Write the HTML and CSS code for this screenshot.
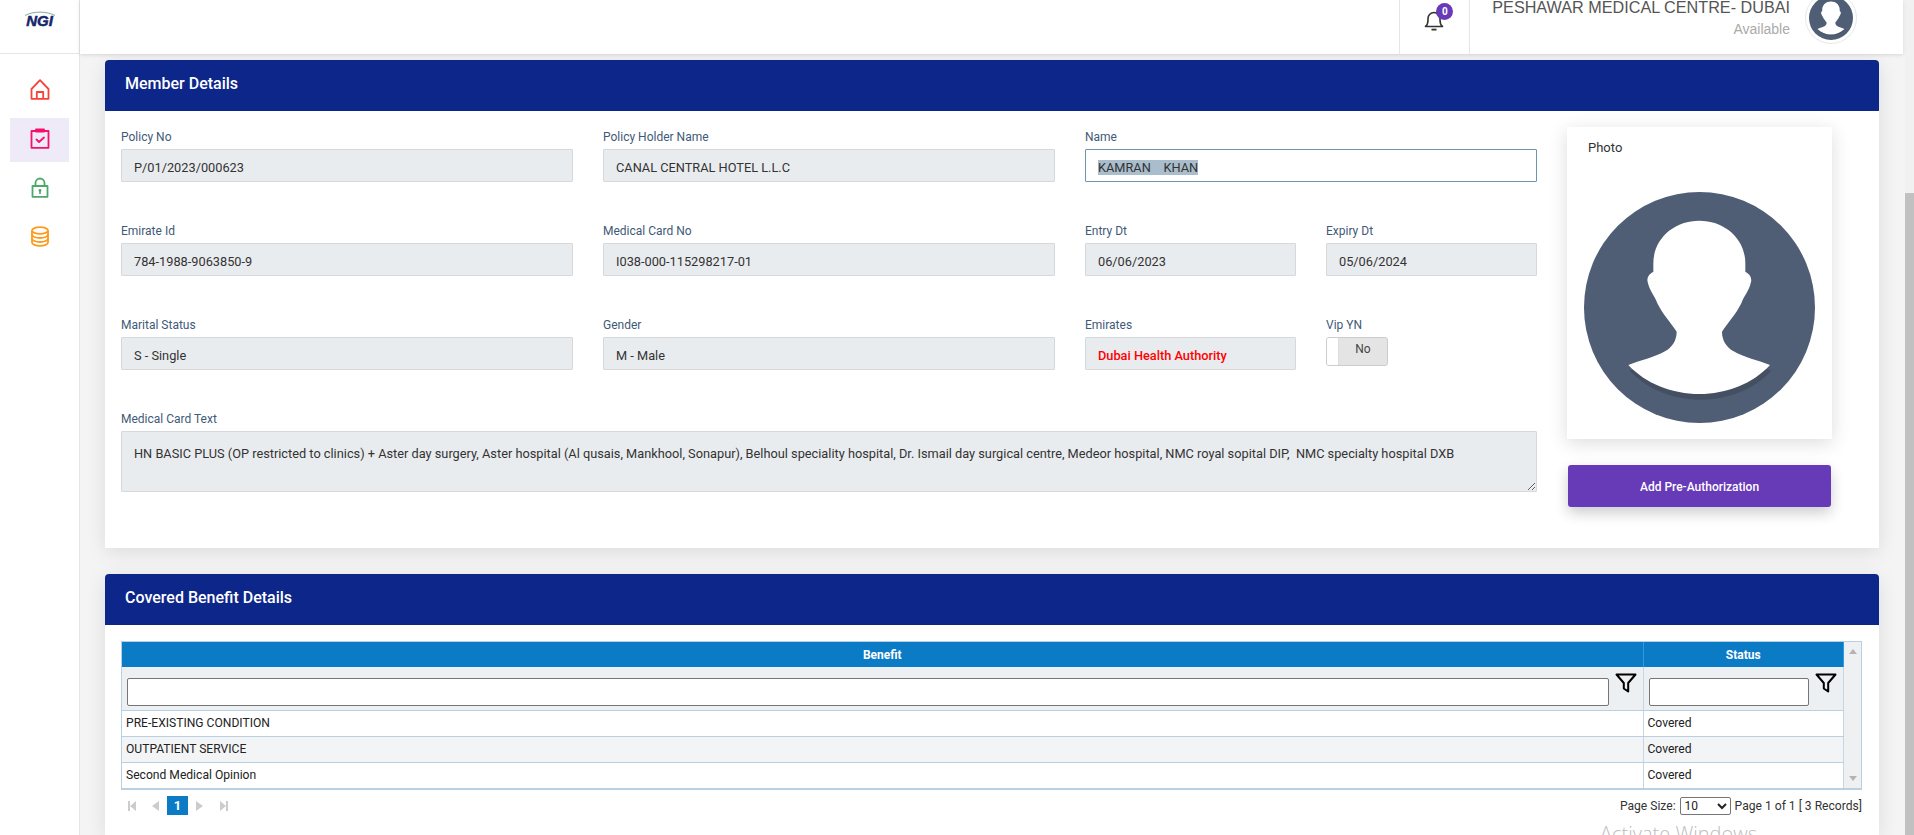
FILE: index.html
```html
<!DOCTYPE html>
<html lang="en">
<head>
<meta charset="utf-8">
<title>Member Details</title>
<link rel="stylesheet" href="styles.css">
</head>
<body>
<svg class="defs" width="0" height="0" aria-hidden="true">
  <defs>
    <symbol id="person" viewBox="0 0 693 693">
      <circle cx="346.5" cy="346.5" r="346.5" fill="#4f5e75"/>
      <path fill="#444f62" transform="translate(4 17)" d="M133 519C170 505 215 495 243 478L449 478C476 495 521 505 558 519C507 575 427 606 346 606C265 606 185 575 133 519Z"/>
      <path fill="#fff" d="M346 86C270 86 208 140 208 214L208 240C195 245 188 258 191 270C198 300 212 310 220 334C235 365 262 395 278 419C278 445 265 465 243 478C215 495 170 505 133 519C185 575 265 606 346 606C427 606 507 575 558 519C521 505 476 495 449 478C427 465 414 445 414 419C430 395 457 365 472 334C480 310 494 300 501 270C504 258 497 245 484 240L484 214C484 140 422 86 346 86Z"/>
    </symbol>
    <symbol id="funnel" viewBox="0 0 22 20">
      <path fill="none" stroke="#000" stroke-width="2" stroke-linejoin="round" d="M1.5 1.5H20.5L13.2 10V18.5L8.8 15.5V10Z"/>
    </symbol>
  </defs>
</svg>

<aside class="sidebar">
  <div class="logo">
    <svg class="logo-arc" width="32" height="5" viewBox="0 0 32 5"><path d="M1 4.5C9 0 23 0 31 4.5" fill="none" stroke="#7fae9a" stroke-width="1"/></svg>
    <span class="logo-text">NGI</span>
  </div>
  <nav class="nav">
    <a class="nav-item">
      <svg width="20" height="21" viewBox="0 0 20 21" fill="none" stroke="#f4433a" stroke-width="1.8" stroke-linejoin="round"><path d="M10 1.2L1.5 10V19.8H18.5V10Z"/><path d="M6.8 19.8V13H13.2V19.8"/></svg>
    </a>
    <a class="nav-item is-active">
      <svg width="20" height="21" viewBox="0 0 20 21" fill="none" stroke="#f5106e" stroke-width="1.8" stroke-linejoin="round"><path d="M1.5 3H18.5V19.8H1.5Z"/><path d="M6 1.5H14V3.5H6Z" fill="#f5106e"/><path d="M6.5 11.5L9 14L14 9.5" stroke-linecap="round"/></svg>
    </a>
    <a class="nav-item">
      <svg width="20" height="21" viewBox="0 0 20 21" fill="none" stroke="#4fa86a" stroke-width="1.8" stroke-linejoin="round"><path d="M2.5 9H17.5V19.8H2.5Z"/><path d="M5.5 9V6A4.5 4.5 0 0 1 14.5 6V9"/><circle cx="10" cy="13.5" r="1.4" fill="#4fa86a" stroke="none"/><path d="M10 14V17" stroke-width="1.6"/></svg>
    </a>
    <a class="nav-item">
      <svg width="20" height="21" viewBox="0 0 20 21" fill="none" stroke="#ff9a1f" stroke-width="1.8"><ellipse cx="10" cy="4.5" rx="8" ry="3.4"/><path d="M2 4.5V16.5C2 18.4 5.6 19.9 10 19.9S18 18.4 18 16.5V4.5"/><path d="M2 8.6C2 10.5 5.6 12 10 12S18 10.5 18 8.6"/><path d="M2 12.6C2 14.5 5.6 16 10 16S18 14.5 18 12.6"/></svg>
    </a>
  </nav>
</aside>

<div class="main">
  <header class="topbar">
    <div class="bell-cell">
      <svg width="20" height="21" viewBox="0 0 20 21" fill="none" stroke="#333" stroke-width="1.6" stroke-linejoin="round"><path d="M1.5 16.5C3.5 15 4 13.5 4 10V8.5A6 6 0 0 1 16 8.5V10C16 13.5 16.500 15 18.500 16.500Z"/><path d="M7.500 19.600H12.500" stroke-width="1.800"/></svg>
      <span class="badge">0</span>
    </div>
    <div class="user-text">
      <span class="user-name">PESHAWAR MEDICAL CENTRE- DUBAI</span>
      <span class="user-status">Available</span>
    </div>
    <div class="user-ring"><svg class="user-pic"><use href="#person"/></svg></div>
  </header>

  <div class="content">
    <section class="card">
      <h2 class="card-title">Member Details</h2>
      <div class="details">
        <div class="form">
          <div class="field span-2"><label>Policy No</label><div class="value">P/01/2023/000623</div></div>
          <div class="field span-2"><label>Policy Holder Name</label><div class="value">CANAL CENTRAL HOTEL L.L.C</div></div>
          <div class="field span-2"><label>Name</label><div class="value is-focus"><span class="selected">KAMRAN &nbsp; &nbsp;KHAN</span></div></div>

          <div class="field span-2"><label>Emirate Id</label><div class="value">784-1988-9063850-9</div></div>
          <div class="field span-2"><label>Medical Card No</label><div class="value">I038-000-115298217-01</div></div>
          <div class="field"><label>Entry Dt</label><div class="value">06/06/2023</div></div>
          <div class="field"><label>Expiry Dt</label><div class="value">05/06/2024</div></div>

          <div class="field span-2"><label>Marital Status</label><div class="value">S - Single</div></div>
          <div class="field span-2"><label>Gender</label><div class="value">M - Male</div></div>
          <div class="field"><label>Emirates</label><div class="value is-alert">Dubai Health Authority</div></div>
          <div class="field"><label>Vip YN</label>
            <div class="toggle"><span class="toggle-knob"></span><span class="toggle-text">No</span></div>
          </div>

          <div class="field span-6"><label>Medical Card Text</label>
            <textarea class="value-area" readonly>HN BASIC PLUS (OP restricted to clinics) + Aster day surgery, Aster hospital (Al qusais, Mankhool, Sonapur), Belhoul speciality hospital, Dr. Ismail day surgical centre, Medeor hospital, NMC royal sopital DIP,  NMC specialty hospital DXB</textarea>
          </div>
        </div>

        <div class="side">
          <div class="photo-card">
            <div class="photo-label">Photo</div>
            <svg class="photo-pic"><use href="#person"/></svg>
          </div>
          <button class="primary-btn" type="button">Add Pre-Authorization</button>
        </div>
      </div>
    </section>

    <section class="card card-fill">
      <h2 class="card-title">Covered Benefit Details</h2>
      <div class="grid-body">
        <div class="grid-wrap">
          <table class="grid">
            <colgroup><col class="col-benefit"><col class="col-status"></colgroup>
            <thead>
              <tr class="head-row"><th>Benefit</th><th>Status</th></tr>
              <tr class="filter-row">
                <td><div class="filter"><input class="filter-input" type="text" aria-label="Filter benefit"><svg class="funnel"><use href="#funnel"/></svg></div></td>
                <td><div class="filter"><input class="filter-input" type="text" aria-label="Filter status"><svg class="funnel"><use href="#funnel"/></svg></div></td>
              </tr>
            </thead>
            <tbody>
              <tr><td>PRE-EXISTING CONDITION</td><td>Covered</td></tr>
              <tr class="alt"><td>OUTPATIENT SERVICE</td><td>Covered</td></tr>
              <tr><td>Second Medical Opinion</td><td>Covered</td></tr>
            </tbody>
          </table>
          <div class="grid-scroll">
            <svg width="8" height="5" viewBox="0 0 8 5"><path d="M4 0L8 5H0Z" fill="#b4b4b4"/></svg>
            <svg width="8" height="5" viewBox="0 0 8 5"><path d="M4 5L8 0H0Z" fill="#b4b4b4"/></svg>
          </div>
        </div>
        <div class="pager">
          <div class="pager-links">
            <svg width="8" height="10" viewBox="0 0 8 10"><path d="M0 0H2V10H0ZM8 0V10L2 5Z" fill="#ccc"/></svg>
            <svg class="gap-prev" width="7" height="10" viewBox="0 0 7 10"><path d="M7 0V10L0 5Z" fill="#ccc"/></svg>
            <span class="page-current">1</span>
            <svg width="7" height="10" viewBox="0 0 7 10"><path d="M0 0V10L7 5Z" fill="#ccc"/></svg>
            <svg class="gap-last" width="8" height="10" viewBox="0 0 8 10"><path d="M8 0H6V10H8ZM0 0V10L6 5Z" fill="#ccc"/></svg>
          </div>
          <div class="pager-info">
            <span>Page Size:</span>
            <select class="page-size" aria-label="Page size"><option>10</option><option>20</option><option>50</option></select>
            <span>Page 1 of 1 [ 3 Records]</span>
          </div>
        </div>
      </div>
    </section>
  </div>
</div>

<div class="scrollbar"><div class="scrollbar-thumb"></div></div>
<div class="watermark">Activate Windows</div>
</body>
</html>
```

FILE: styles.css
```css
* { box-sizing: border-box; }

html, body { height: 100%; }

body {
  margin: 0;
  display: flex;
  height: 835px;
  overflow: hidden;
  background: #f4f4f4;
  color: #222;
  font-family: Roboto, "Liberation Sans", sans-serif;
  font-size: 12px;
}

.defs { position: absolute; }

/* Sidebar */
.sidebar {
  flex: 0 0 80px;
  background: #fff;
  border-right: 1px solid #e6e6e6;
}

.logo {
  height: 54px;
  border-bottom: 1px solid #e6e6e6;
  display: flex;
  flex-direction: column;
  align-items: center;
  padding-top: 11px;
}

.logo-arc { display: block; margin-left: 1px; }

.logo-text {
  margin-top: -3px;
  font-family: "Liberation Sans", sans-serif;
  font-size: 15px;
  line-height: 16px;
  font-weight: 700;
  font-style: italic;
  color: #17266a;
  -webkit-text-stroke: .5px #17266a;
}

.nav {
  display: flex;
  flex-direction: column;
  gap: 5px;
  padding: 15px 10px 0;
}

.nav-item {
  height: 44px;
  display: flex;
  justify-content: center;
  padding-top: 10px;
}

.nav-item.is-active { background: #efeaf7; }

/* Main column */
.main {
  flex: 1;
  min-width: 0;
  display: flex;
  flex-direction: column;
}

.topbar {
  flex: 0 0 54px;
  margin-right: 2px;
  display: flex;
  justify-content: flex-end;
  background: #fff;
  box-shadow: 0 1px 4px rgba(0, 0, 0, .12);
  position: relative;
  z-index: 2;
}

.bell-cell {
  width: 71px;
  position: relative;
  display: flex;
  justify-content: center;
  padding-top: 10px;
  border-left: 1px solid #e6e6e6;
  border-right: 1px solid #e6e6e6;
}

.bell-cell svg { margin-right: 1px; }

.badge {
  position: absolute;
  left: 36px;
  top: 3px;
  width: 17px;
  height: 17px;
  border-radius: 50%;
  background: #673ab7;
  color: #fff;
  font-size: 10px;
  font-weight: 700;
  line-height: 17px;
  text-align: center;
}

.user-text {
  display: flex;
  flex-direction: column;
  align-items: flex-end;
  margin-top: -2px;
  padding-left: 22px;
  font-family: "Liberation Sans", sans-serif;
}

.user-name { font-size: 16.2px; line-height: 18px; color: #555; }

.user-status { margin-top: 5px; font-size: 14px; line-height: 16px; color: #aaa; }

.user-ring {
  width: 52px;
  height: 52px;
  margin: -8px 46px 0 15px;
  padding: 3px;
  border: 1px solid #e8e8e8;
  border-radius: 50%;
}

.user-pic { display: block; width: 44px; height: 44px; }

/* Content */
.content {
  flex: 1;
  min-height: 0;
  display: flex;
  flex-direction: column;
  gap: 26px;
  padding: 6px 26px 0 25px;
}

.card {
  flex: none;
  background: #fff;
  border-radius: 4px 4px 0 0;
  box-shadow: 0 4px 20px rgba(0, 0, 0, .1);
}

.card-fill { flex: 1; }

.card-title {
  margin: 0;
  height: 51px;
  padding: 0 20px;
  border-radius: 4px 4px 0 0;
  background: #0d2689;
  color: #fff;
  font-size: 16px;
  font-weight: 500;
  line-height: 47px;
}

.details {
  display: flex;
  gap: 30px;
  padding: 16px 47px 41px 16px;
}

.form {
  width: 1416px;
  flex: none;
  display: grid;
  grid-template-columns: repeat(6, 1fr);
  gap: 39px 30px;
  align-content: start;
}

.span-2 { grid-column: span 2; }
.span-6 { grid-column: span 6; }

.field label {
  display: block;
  height: 22px;
  line-height: 20px;
  color: #3f5a78;
  font-size: 12px;
}

.value {
  height: 33px;
  padding: 2px 12px 0;
  line-height: 31px;
  font-size: 12.78px;
  color: #333;
  background: #e9ecef;
  border: 1px solid #d6d8db;
  border-radius: 1px;
  white-space: nowrap;
}

.value.is-focus { background: #fff; border-color: #6f94ad; }

.selected { background: #a9bdcc; }

.value.is-alert { color: #f00; font-weight: 500; }

.value-area {
  display: block;
  width: 100%;
  height: 61px;
  padding: 13px 12px 0;
  font-family: inherit;
  font-size: 12.78px;
  line-height: 18px;
  color: #333;
  background: #e9ecef;
  border: 1px solid #d6d8db;
  border-radius: 1px;
  outline: 0;
}

.toggle {
  width: 62px;
  height: 29px;
  display: flex;
  background: #e4e4e4;
  border: 1px solid #ccc;
  border-radius: 3px;
  overflow: hidden;
}

.toggle-knob { width: 12px; background: #fff; border-right: 1px solid #ddd; }

.toggle-text { flex: 1; text-align: center; line-height: 22px; color: #444; }

/* Photo column */
.side {
  width: 265px;
  flex: none;
  display: flex;
  flex-direction: column;
  gap: 26px;
}

.photo-card {
  height: 312px;
  padding: 12px 0 0;
  background: #fff;
  box-shadow: 0 4px 18px rgba(0, 0, 0, .14);
}

.photo-label {
  padding-left: 21px;
  font-size: 13px;
  line-height: 18px;
  color: #333;
}

.photo-pic {
  display: block;
  width: 231px;
  height: 231px;
  margin: 35px auto 0;
}

.primary-btn {
  height: 42px;
  margin: 0 1px;
  padding: 2px 0 0;
  border: 0;
  border-radius: 3px;
  background: #673ab7;
  color: #fff;
  font-family: inherit;
  font-size: 12px;
  font-weight: 500;
  box-shadow: 0 6px 14px rgba(0, 0, 0, .2);
}

/* Benefit grid */
.grid-body { padding: 16px 17px 0 16px; }

.grid-wrap {
  display: flex;
  border: 1px solid #b9d0e3;
  border-bottom-width: 2px;
}

.grid {
  flex: none;
  width: 1722px;
  border-collapse: collapse;
  table-layout: fixed;
}

.col-benefit { width: 1521px; }

.head-row th {
  height: 25px;
  padding: 0;
  background: #0b7bc6;
  color: #fff;
  font-size: 12px;
  font-weight: 700;
  border-right: 1px solid #2e9be0;
}

.filter-row td {
  height: 43px;
  padding: 0 6px 0 5px;
  background: #edf0f3;
  border-right: 1px solid #c5d7e6;
  border-bottom: 1px solid #b9d0e3;
}

.filter { display: flex; align-items: flex-start; gap: 6px; height: 39px; padding-top: 9px; }

.filter-input {
  flex: 1;
  min-width: 0;
  height: 28px;
  padding: 0;
  background: #fff;
  border: 1px solid #767676;
  border-radius: 2px;
}

.funnel { flex: none; width: 22px; height: 20px; margin-top: -5px; }

.grid tbody td {
  height: 26px;
  padding: 0 4px;
  font-size: 12.1px;
  color: #222;
  border-right: 1px solid #c5d7e6;
  border-bottom: 1px solid #b9d0e3;
}

.grid tbody tr:last-child td { border-bottom: 0; }

.grid tbody tr.alt td { background: #f3f4f5; }

.grid-scroll {
  flex: 1;
  display: flex;
  flex-direction: column;
  align-items: center;
  justify-content: space-between;
  padding: 7px 0;
  background: #eef0f2;
}

.pager {
  display: flex;
  justify-content: space-between;
  align-items: center;
  height: 19px;
  margin-top: 6px;
}

.pager-links { display: flex; align-items: center; gap: 8px; padding-left: 7px; }

.gap-prev { margin-left: 8px; }
.gap-last { margin-left: 9px; }

.page-current {
  width: 21px;
  height: 19px;
  background: #0b7bc6;
  color: #fff;
  font-size: 13px;
  font-weight: 700;
  line-height: 19px;
  text-align: center;
}

.pager-info { display: flex; align-items: center; gap: 4px; font-size: 12.1px; color: #333; }

.page-size {
  width: 51px;
  height: 18px;
  padding: 0;
  font-family: inherit;
  font-size: 12px;
  color: #222;
  background: #fff;
  border: 1px solid #767676;
  border-radius: 2px;
}

/* Page scrollbar */
.scrollbar { flex: 0 0 9px; background: #f1f1f1; padding-top: 193px; }

.scrollbar-thumb { height: 642px; background: #c1c1c1; }

/* Windows activation watermark lying over the page */
.watermark {
  position: absolute;
  left: 1600px;
  top: 820px;
  font-family: "Open Sans", sans-serif;
  font-size: 20px;
  font-weight: 300;
  line-height: 28px;
  color: #bdbdbd;
  white-space: nowrap;
}
```
